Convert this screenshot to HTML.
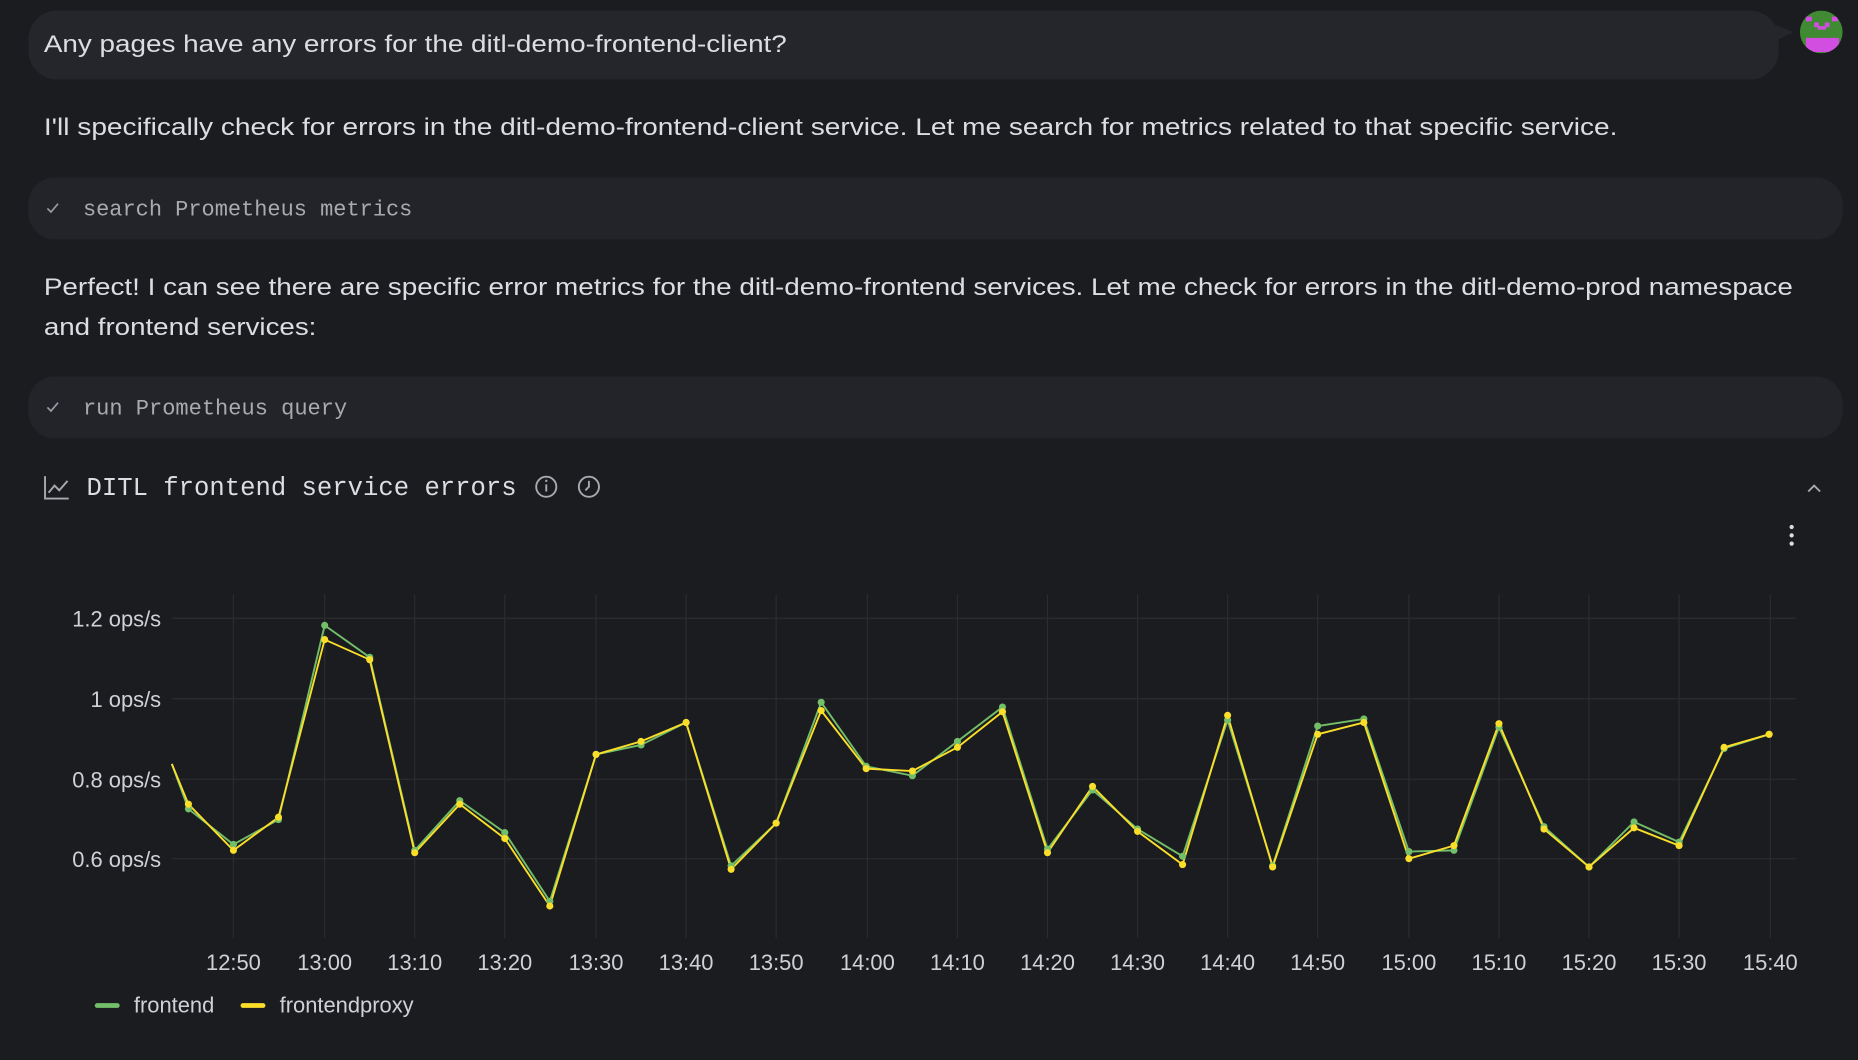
<!DOCTYPE html>
<html><head><meta charset="utf-8"><style>
html,body{margin:0;padding:0;background:#1b1c20;overflow:hidden}
svg{display:block}
</style></head><body>
<svg width="1858" height="1060" viewBox="0 0 1568 895" preserveAspectRatio="none" xmlns="http://www.w3.org/2000/svg" font-family="Liberation Sans, sans-serif">
<rect width="1568" height="895" fill="#1b1c20"/>
<rect x="24" y="9" width="1477" height="58" rx="24" fill="#25262b"/>
<path d="M1495 20 L1514 27 L1495 36 Z" fill="#25262b"/>
<text x="37" y="44" font-size="20.5" fill="#dcdde2" textLength="627" lengthAdjust="spacingAndGlyphs">Any pages have any errors for the ditl-demo-frontend-client?</text>
<clipPath id="av"><circle cx="1537" cy="27" r="18"/></clipPath>
<g clip-path="url(#av)">
<rect x="1519" y="9" width="36" height="36" fill="#3f8a32"/>
<rect x="1524" y="32" width="28" height="12" fill="#d24ee0"/>
<rect x="1531" y="19" width="4" height="4" fill="#d24ee0"/><rect x="1540" y="19" width="4" height="4" fill="#d24ee0"/>
<rect x="1534" y="22" width="7" height="3" fill="#d24ee0"/>
<rect x="1524" y="14" width="5" height="4" fill="#d24ee0"/><rect x="1546" y="14" width="5" height="4" fill="#d24ee0"/>
<rect x="1531" y="44" width="3" height="3" fill="#3f8a32"/>
</g>
<text x="37" y="114" font-size="20.5" fill="#dcdde2" textLength="1328" lengthAdjust="spacingAndGlyphs">I'll specifically check for errors in the ditl-demo-frontend-client service. Let me search for metrics related to that specific service.</text>
<rect x="24" y="150" width="1531" height="52" rx="22" fill="#232429"/>
<path d="M40 176 l3 3 l6 -7" stroke="#9a9ba2" stroke-width="1.4" fill="none"/>
<text x="70" y="182" font-family="Liberation Mono, monospace" font-size="18.5" fill="#a9aab0" textLength="278" lengthAdjust="spacingAndGlyphs">search Prometheus metrics</text>
<text x="37" y="249" font-size="20.5" fill="#dcdde2" textLength="1476" lengthAdjust="spacingAndGlyphs">Perfect! I can see there are specific error metrics for the ditl-demo-frontend services. Let me check for errors in the ditl-demo-prod namespace</text>
<text x="37" y="283" font-size="20.5" fill="#dcdde2" textLength="230" lengthAdjust="spacingAndGlyphs">and frontend services:</text>
<rect x="24" y="318" width="1531" height="52" rx="22" fill="#232429"/>
<path d="M40 344 l3 3 l6 -7" stroke="#9a9ba2" stroke-width="1.4" fill="none"/>
<text x="70" y="350" font-family="Liberation Mono, monospace" font-size="18.5" fill="#a9aab0" textLength="223" lengthAdjust="spacingAndGlyphs">run Prometheus query</text>
<g stroke="#a9aab0" stroke-width="1.6" fill="none">
<path d="M38 402 V421 H58"/><path d="M41 416 l5 -6 l4 4 l7 -8"/>
<circle cx="461" cy="411" r="8.5"/><path d="M461 409 v6"/>
<circle cx="497" cy="411" r="8.5"/><path d="M497 406 v5 l-3 3"/>
<path d="M1526 415 l5 -5 l5 5"/>
</g>
<circle cx="461" cy="406" r="1" fill="#a9aab0"/>
<text x="73" y="418" font-family="Liberation Mono, monospace" font-size="21.5" fill="#dcdde2" textLength="363" lengthAdjust="spacingAndGlyphs">DITL frontend service errors</text>
<circle cx="1512" cy="445" r="1.8" fill="#dcdde2"/><circle cx="1512" cy="452" r="1.8" fill="#dcdde2"/><circle cx="1512" cy="459" r="1.8" fill="#dcdde2"/>
<g stroke="#2b2c31" stroke-width="1">
<path d="M145 522 H1516 M145 590 H1516 M145 658 H1516 M145 725 H1516"/>
<path d="M197 502V792 M274 502V792 M350 502V792 M426 502V792 M503 502V792 M579 502V792 M655 502V792 M732 502V792 M808 502V792 M884 502V792 M960 502V792 M1036 502V792 M1112 502V792 M1189 502V792 M1265 502V792 M1341 502V792 M1417 502V792 M1494 502V792"/>
</g>
<g font-size="18.5" fill="#d0d1d6" text-anchor="end">
<text x="136" y="529">1.2 ops/s</text><text x="136" y="597">1 ops/s</text><text x="136" y="665">0.8 ops/s</text><text x="136" y="732">0.6 ops/s</text>
</g>
<g font-size="18.5" fill="#d0d1d6" text-anchor="middle">
<text x="197" y="819">12:50</text><text x="274" y="819">13:00</text><text x="350" y="819">13:10</text><text x="426" y="819">13:20</text><text x="503" y="819">13:30</text><text x="579" y="819">13:40</text><text x="655" y="819">13:50</text><text x="732" y="819">14:00</text><text x="808" y="819">14:10</text><text x="884" y="819">14:20</text><text x="960" y="819">14:30</text><text x="1036" y="819">14:40</text><text x="1112" y="819">14:50</text><text x="1189" y="819">15:00</text><text x="1265" y="819">15:10</text><text x="1341" y="819">15:20</text><text x="1417" y="819">15:30</text><text x="1494" y="819">15:40</text>
</g>
<rect x="80" y="847" width="21" height="4" rx="2" fill="#73bf69"/>
<text x="113" y="855" font-size="18.5" fill="#d0d1d6">frontend</text>
<rect x="203" y="847" width="21" height="4" rx="2" fill="#fade2a"/>
<text x="236" y="855" font-size="18.5" fill="#d0d1d6">frontendproxy</text>
<g fill="none" stroke-width="1.6" stroke-linejoin="round">
<polyline stroke="#73bf69" points="145,645 159,683 197,713 235,692 274,528 312,555 350,718 388,676 426,703 464,761 503,637 541,629 579,610 617,731 655,695 693,593 731,647 770,655 808,626 846,597 884,717 922,667 960,700 998,723 1036,608 1074,731 1112,613 1151,607 1189,719 1227,718 1265,614 1303,698 1341,732 1379,694 1417,711 1455,632 1493,620"/>
<polyline stroke="#fade2a" points="145,645 159,679 197,718 235,690 274,540 312,557 350,720 388,679 426,708 464,765 503,637 541,626 579,610 617,734 655,695 693,600 731,649 770,651 808,631 846,601 884,720 922,664 960,702 998,730 1036,604 1074,732 1112,620 1151,610 1189,725 1227,714 1265,611 1303,700 1341,732 1379,699 1417,714 1455,631 1493,620"/>
</g>
<g fill="#73bf69">
<circle cx="159" cy="683" r="3"/><circle cx="197" cy="713" r="3"/><circle cx="235" cy="692" r="3"/><circle cx="274" cy="528" r="3"/><circle cx="312" cy="555" r="3"/><circle cx="350" cy="718" r="3"/><circle cx="388" cy="676" r="3"/><circle cx="426" cy="703" r="3"/><circle cx="464" cy="761" r="3"/><circle cx="503" cy="637" r="3"/><circle cx="541" cy="629" r="3"/><circle cx="579" cy="610" r="3"/><circle cx="617" cy="731" r="3"/><circle cx="655" cy="695" r="3"/><circle cx="693" cy="593" r="3"/><circle cx="731" cy="647" r="3"/><circle cx="770" cy="655" r="3"/><circle cx="808" cy="626" r="3"/><circle cx="846" cy="597" r="3"/><circle cx="884" cy="717" r="3"/><circle cx="922" cy="667" r="3"/><circle cx="960" cy="700" r="3"/><circle cx="998" cy="723" r="3"/><circle cx="1036" cy="608" r="3"/><circle cx="1074" cy="731" r="3"/><circle cx="1112" cy="613" r="3"/><circle cx="1151" cy="607" r="3"/><circle cx="1189" cy="719" r="3"/><circle cx="1227" cy="718" r="3"/><circle cx="1265" cy="614" r="3"/><circle cx="1303" cy="698" r="3"/><circle cx="1341" cy="732" r="3"/><circle cx="1379" cy="694" r="3"/><circle cx="1417" cy="711" r="3"/><circle cx="1455" cy="632" r="3"/><circle cx="1493" cy="620" r="3"/>
</g>
<g fill="#fade2a">
<circle cx="159" cy="679" r="3"/><circle cx="197" cy="718" r="3"/><circle cx="235" cy="690" r="3"/><circle cx="274" cy="540" r="3"/><circle cx="312" cy="557" r="3"/><circle cx="350" cy="720" r="3"/><circle cx="388" cy="679" r="3"/><circle cx="426" cy="708" r="3"/><circle cx="464" cy="765" r="3"/><circle cx="503" cy="637" r="3"/><circle cx="541" cy="626" r="3"/><circle cx="579" cy="610" r="3"/><circle cx="617" cy="734" r="3"/><circle cx="655" cy="695" r="3"/><circle cx="693" cy="600" r="3"/><circle cx="731" cy="649" r="3"/><circle cx="770" cy="651" r="3"/><circle cx="808" cy="631" r="3"/><circle cx="846" cy="601" r="3"/><circle cx="884" cy="720" r="3"/><circle cx="922" cy="664" r="3"/><circle cx="960" cy="702" r="3"/><circle cx="998" cy="730" r="3"/><circle cx="1036" cy="604" r="3"/><circle cx="1074" cy="732" r="3"/><circle cx="1112" cy="620" r="3"/><circle cx="1151" cy="610" r="3"/><circle cx="1189" cy="725" r="3"/><circle cx="1227" cy="714" r="3"/><circle cx="1265" cy="611" r="3"/><circle cx="1303" cy="700" r="3"/><circle cx="1341" cy="732" r="3"/><circle cx="1379" cy="699" r="3"/><circle cx="1417" cy="714" r="3"/><circle cx="1455" cy="631" r="3"/><circle cx="1493" cy="620" r="3"/>
</g>
</svg>
</body></html>
